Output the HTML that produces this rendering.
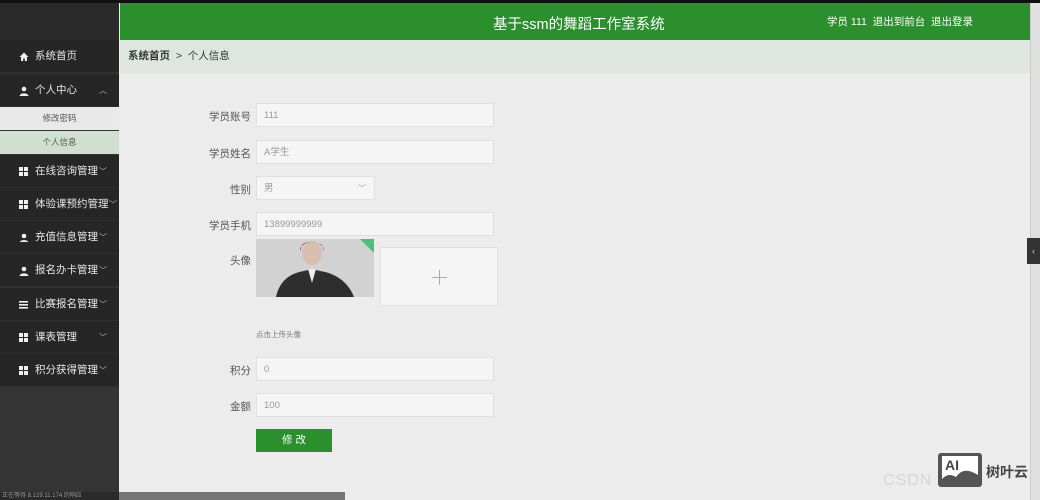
<!DOCTYPE html>
<html><head><meta charset="utf-8"><style>
*{margin:0;padding:0;box-sizing:border-box}
body{width:1040px;height:500px;overflow:hidden;position:relative;background:#ececec;font-family:"Liberation Sans","Noto Sans CJK SC",sans-serif;font-size:11px;color:#555}
.abs{position:absolute}
svg{display:block}
#top{left:0;top:0;width:1040px;height:3px;background:#111}
#side{left:0;top:0;width:119px;height:500px;background:#343434}
#sidetop{left:0;top:3px;width:119px;height:37px;background:#2a2a2a}
.mi{position:absolute;left:0;width:119px;height:33px;background:#262626;border-bottom:1px solid #303030;color:#e6e6e6;font-size:10.5px;line-height:33px;padding-left:35px}
.mi i{position:absolute;left:19px;top:12px;width:10px;height:10px}
.mi b{position:absolute;right:12px;top:0;font-weight:normal;font-size:8px;color:#bbb}
.sub{position:absolute;left:0;width:119px;height:23px;line-height:23px;text-align:center;font-size:8.5px;color:#555}
#hdr{left:120px;top:3px;width:910px;height:37px;background:#2b8f2e;color:#fff}
#crumb{left:120px;top:40px;width:910px;height:33px;background:#dfe6df;font-size:10.5px;line-height:33px;padding-left:8px;color:#333}
#scroll{left:1030px;top:3px;width:10px;height:497px;background:#e0e0e0;border-left:1px solid #ccc}
.lb{position:absolute;width:80px;left:171px;text-align:right;font-size:10.5px;color:#555}
.in{position:absolute;left:256px;width:238px;height:24px;background:#f5f5f5;border:1px solid #e0e0e0;font-size:9.5px;color:#999;line-height:23px;padding-left:7px}
</style></head><body>
<div id="side" class="abs"></div>
<div id="sidetop" class="abs"></div>
<div id="top" class="abs"></div>
<div class="mi" style="top:40px"><i><svg width="10" height="10" viewBox="0 0 10 10"><path d="M5 0.5L0.5 5H2v4h2.2V6.5h1.6V9H8V5h1.5z" fill="#eee"/></svg></i>系统首页</div>
<div class="mi" style="top:74px"><i><svg width="10" height="10" viewBox="0 0 10 10"><circle cx="5" cy="3" r="2.3" fill="#eee"/><path d="M0.5 10C1 6.5 9 6.5 9.5 10z" fill="#eee"/></svg></i>个人中心<b>︿</b></div>
<div class="sub" style="top:107px;background:#e9e9e9">修改密码</div>
<div class="sub" style="top:131px;background:#cfe0cf">个人信息</div>
<div class="mi" style="top:155px"><i><svg width="10" height="10"><rect x="0" y="0" width="4" height="4" fill="#eee"/><rect x="5" y="0" width="4" height="4" fill="#eee"/><rect x="0" y="5" width="4" height="4" fill="#eee"/><rect x="5" y="5" width="4" height="4" fill="#eee"/></svg></i>在线咨询管理<b>﹀</b></div>
<div class="mi" style="top:188px"><i><svg width="10" height="10"><rect x="0" y="0" width="4" height="4" fill="#eee"/><rect x="5" y="0" width="4" height="4" fill="#eee"/><rect x="0" y="5" width="4" height="4" fill="#eee"/><rect x="5" y="5" width="4" height="4" fill="#eee"/></svg></i>体验课预约管理<b style="right:2px">﹀</b></div>
<div class="mi" style="top:221px"><i><svg width="10" height="10" viewBox="0 0 10 10"><circle cx="5" cy="3" r="2.3" fill="#eee"/><path d="M1 9C1 6.5 9 6.5 9 9z" fill="#eee"/></svg></i>充值信息管理<b>﹀</b></div>
<div class="mi" style="top:254px"><i><svg width="10" height="10" viewBox="0 0 10 10"><circle cx="5" cy="3" r="2.3" fill="#eee"/><path d="M0.5 10C1 6.5 9 6.5 9.5 10z" fill="#eee"/></svg></i>报名办卡管理<b>﹀</b></div>
<div class="mi" style="top:288px"><i><svg width="10" height="10"><rect x="0" y="1" width="9" height="1.6" fill="#eee"/><rect x="0" y="4" width="9" height="1.6" fill="#eee"/><rect x="0" y="7" width="9" height="1.6" fill="#eee"/></svg></i>比赛报名管理<b>﹀</b></div>
<div class="mi" style="top:321px"><i><svg width="10" height="10"><rect x="0" y="0" width="4" height="4" fill="#eee"/><rect x="5" y="0" width="4" height="4" fill="#eee"/><rect x="0" y="5" width="4" height="4" fill="#eee"/><rect x="5" y="5" width="4" height="4" fill="#eee"/></svg></i>课表管理<b>﹀</b></div>
<div class="mi" style="top:354px"><i><svg width="10" height="10"><rect x="0" y="0" width="4" height="4" fill="#eee"/><rect x="5" y="0" width="4" height="4" fill="#eee"/><rect x="0" y="5" width="4" height="4" fill="#eee"/><rect x="5" y="5" width="4" height="4" fill="#eee"/></svg></i>积分获得管理<b>﹀</b></div>

<div id="hdr" class="abs"><div class="abs" style="left:373px;top:10px;font-size:14.5px">基于ssm的舞蹈工作室系统</div><div class="abs" style="left:707px;top:11px;font-size:10.5px">学员 111&nbsp; 退出到前台&nbsp; 退出登录</div></div>
<div id="crumb" class="abs"><b>系统首页</b> &nbsp;&gt;&nbsp; 个人信息</div>
<div id="scroll" class="abs"></div>
<div class="abs" style="left:1027px;top:238px;width:13px;height:26px;background:#333;color:#ccc;font-size:9px;line-height:26px;text-align:center">‹</div>

<div class="lb" style="top:109px">学员账号</div><div class="in" style="top:103px">111</div>
<div class="lb" style="top:146px">学员姓名</div><div class="in" style="top:140px">A学生</div>
<div class="lb" style="top:182px">性别</div><div class="in" style="top:176px;width:119px">男<span style="position:absolute;right:8px;font-size:8px">﹀</span></div>
<div class="lb" style="top:218px">学员手机</div><div class="in" style="top:212px">13899999999</div>
<div class="lb" style="top:253px">头像</div>
<div class="abs" style="left:256px;top:239px;width:118px;height:58px;background:#d2d2d2;overflow:hidden">
<svg width="118" height="58"><path d="M104 0h14v14z" fill="#4cc07a"/><path d="M20 58C24 40 36 34 48 32L56 30 64 32C78 34 92 42 98 58z" fill="#2e2e2e"/><ellipse cx="56" cy="14" rx="10" ry="12" fill="#d9bfb0"/><path d="M44 12C44 0 68 0 68 12L66 6C60 2 50 2 46 6z" fill="#2a2222"/><path d="M52 30L56 44 60 30z" fill="#eee"/></svg></div>
<div class="abs" style="left:380px;top:247px;width:118px;height:59px;background:#f5f5f5;border:1px solid #e0e0e0"><div class="abs" style="left:51px;top:29px;width:15px;height:1px;background:#aaa"></div><div class="abs" style="left:58px;top:22px;width:1px;height:15px;background:#aaa"></div></div>
<div class="abs" style="left:256px;top:329px;font-size:7.5px;color:#777">点击上传头像</div>
<div class="lb" style="top:363px">积分</div><div class="in" style="top:357px">0</div>
<div class="lb" style="top:399px">金额</div><div class="in" style="top:393px">100</div>
<div class="abs" style="left:256px;top:429px;width:76px;height:23px;background:#2a8f2d;color:#fff;font-size:10.5px;line-height:23px;text-align:center">修 改</div>

<div class="abs" style="left:0;top:492px;width:119px;height:8px;background:#2a2a2a;color:#999;font-size:6px;line-height:8px;padding-left:2px;white-space:nowrap;overflow:hidden">正在等待 8.129.11.174 的响应</div>
<div class="abs" style="left:119px;top:492px;width:226px;height:8px;background:#777"></div>
<div class="abs" style="left:883px;top:472px;font-size:16px;color:#d6d6d6;letter-spacing:1px">CSDN</div>
<div class="abs" style="left:938px;top:453px;width:44px;height:34px;background:#555;border-radius:3px"><div class="abs" style="left:4px;top:3px;width:36px;height:27px;background:#fff"></div><div class="abs" style="left:7px;top:4px;font-weight:bold;font-size:14px;color:#444">AI</div><svg class="abs" style="left:4px;top:14px" width="36" height="16"><path d="M0 16V12C6 6 10 8 14 10 20 2 26 2 36 8V16z" fill="#555"/></svg></div>
<div class="abs" style="left:986px;top:462px;font-size:14px;font-weight:bold;color:#444">树叶云</div>
</body></html>
